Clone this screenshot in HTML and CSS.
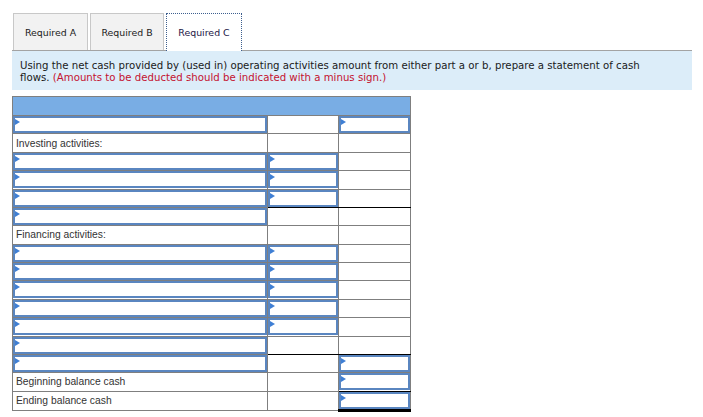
FILE: index.html
```html
<!DOCTYPE html>
<html>
<head>
<meta charset="utf-8">
<link rel="stylesheet" href="styles.css">
</head>
<body>
<div class="page">
  <div class="tabs">
    <div class="tab tab-a">Required A</div>
    <div class="tab tab-b">Required B</div>
    <div class="tab tab-c active">Required C</div>
  </div>
  <div class="panel">
    <p class="line">Using the net cash provided by (used in) operating activities amount from either part a or b, prepare a statement of cash</p>
    <p class="line">flows. <span class="red">(Amounts to be deducted should be indicated with a minus sign.)</span></p>
  </div>
  <table class="sheet">
    <colgroup><col class="c1"><col class="c2"><col class="c3"></colgroup>
    <tr class="head"><td colspan="3"></td></tr>
    <tr><td class="in"><div class="field"></div></td><td></td><td class="in"><div class="field"></div></td></tr>
    <tr><td class="label">Investing activities:</td><td></td><td></td></tr>
    <tr><td class="in"><div class="field"></div></td><td class="in"><div class="field"></div></td><td></td></tr>
    <tr><td class="in"><div class="field"></div></td><td class="in"><div class="field"></div></td><td></td></tr>
    <tr><td class="in"><div class="field"></div></td><td class="in bb"><div class="field"></div></td><td class="bb"></td></tr>
    <tr><td class="in"><div class="field"></div></td><td></td><td></td></tr>
    <tr><td class="label">Financing activities:</td><td></td><td></td></tr>
    <tr><td class="in"><div class="field"></div></td><td class="in"><div class="field"></div></td><td></td></tr>
    <tr><td class="in"><div class="field"></div></td><td class="in"><div class="field"></div></td><td></td></tr>
    <tr><td class="in"><div class="field"></div></td><td class="in"><div class="field"></div></td><td></td></tr>
    <tr><td class="in"><div class="field"></div></td><td class="in"><div class="field"></div></td><td></td></tr>
    <tr><td class="in"><div class="field"></div></td><td class="in"><div class="field"></div></td><td></td></tr>
    <tr><td class="in"><div class="field"></div></td><td class="bb"></td><td class="bb"></td></tr>
    <tr><td class="in"><div class="field"></div></td><td></td><td class="in"><div class="field"></div></td></tr>
    <tr><td class="label">Beginning balance cash</td><td></td><td class="in bb"><div class="field"></div></td></tr>
    <tr><td class="label">Ending balance cash</td><td></td><td class="in total"><div class="field"></div></td></tr>
  </table>
</div>
</body>
</html>
```

FILE: styles.css
```css
html, body {
  margin: 0;
  padding: 0;
  background: #ffffff;
}

.page {
  padding: 13px 0 0 12px;
  width: 680px;
}

.tabs {
  display: flex;
  align-items: flex-end;
  gap: 2px;
  padding-left: 1px;
  height: 37px;
}

.tab {
  box-sizing: border-box;
  height: 37px;
  border: 1px solid #c8c8c8;
  border-bottom: none;
  background: #f2f2f2;
  font-family: "DejaVu Sans", Verdana, sans-serif;
  font-size: 9.4px;
  color: #1a1a1a;
  display: flex;
  align-items: center;
  justify-content: center;
}

.tab-a { width: 75px; }
.tab-b { width: 74px; }
.tab-c { width: 76px; }

.tab.active {
  background: #ffffff;
  border: 1px dotted #3d5f8f;
  border-bottom: none;
  color: #1c1646;
  height: 38px;
  margin-bottom: -1px;
  position: relative;
  z-index: 1;
}

.panel {
  border-top: 1px solid #a3a3a3;
  background: #dcedf9;
  padding: 9px 8px 6px 8px;
  height: 24px;
}

.panel .line {
  margin: 0;
  white-space: nowrap;
  font-family: "DejaVu Sans", Verdana, sans-serif;
  font-size: 10.2px;
  line-height: 12px;
  color: #1a1a1a;
}

.red {
  color: #c4122f;
}

.sheet {
  margin-top: 6px;
  border-collapse: collapse;
  table-layout: fixed;
  width: 398px;
}

.c1 { width: 255px; }
.c2 { width: 71px; }
.c3 { width: 72px; }

.sheet td {
  border: 1px solid #7f7f7f;
  padding: 0;
  height: 17.375px;
  vertical-align: top;
}

.sheet tr.head td {
  background: #79ade4;
  height: 18px;
}

.sheet td.label {
  font-family: "Liberation Sans", Arial, sans-serif;
  font-size: 10.3px;
  color: #333333;
  padding-left: 3px;
  vertical-align: middle;
}

.sheet td.bb {
  border-bottom-color: #000000;
}

.sheet td.total {
  border-bottom: 3px solid #000000;
}

.field {
  position: relative;
  box-sizing: border-box;
  height: 17px;
  border: 2px solid #5a86c0;
  margin: 0;
}

.field::before {
  content: "";
  position: absolute;
  left: 0;
  top: 1px;
  width: 0;
  height: 0;
  border-left: 5px solid #3f7fd4;
  border-top: 3px solid transparent;
  border-bottom: 3px solid transparent;
}
```
